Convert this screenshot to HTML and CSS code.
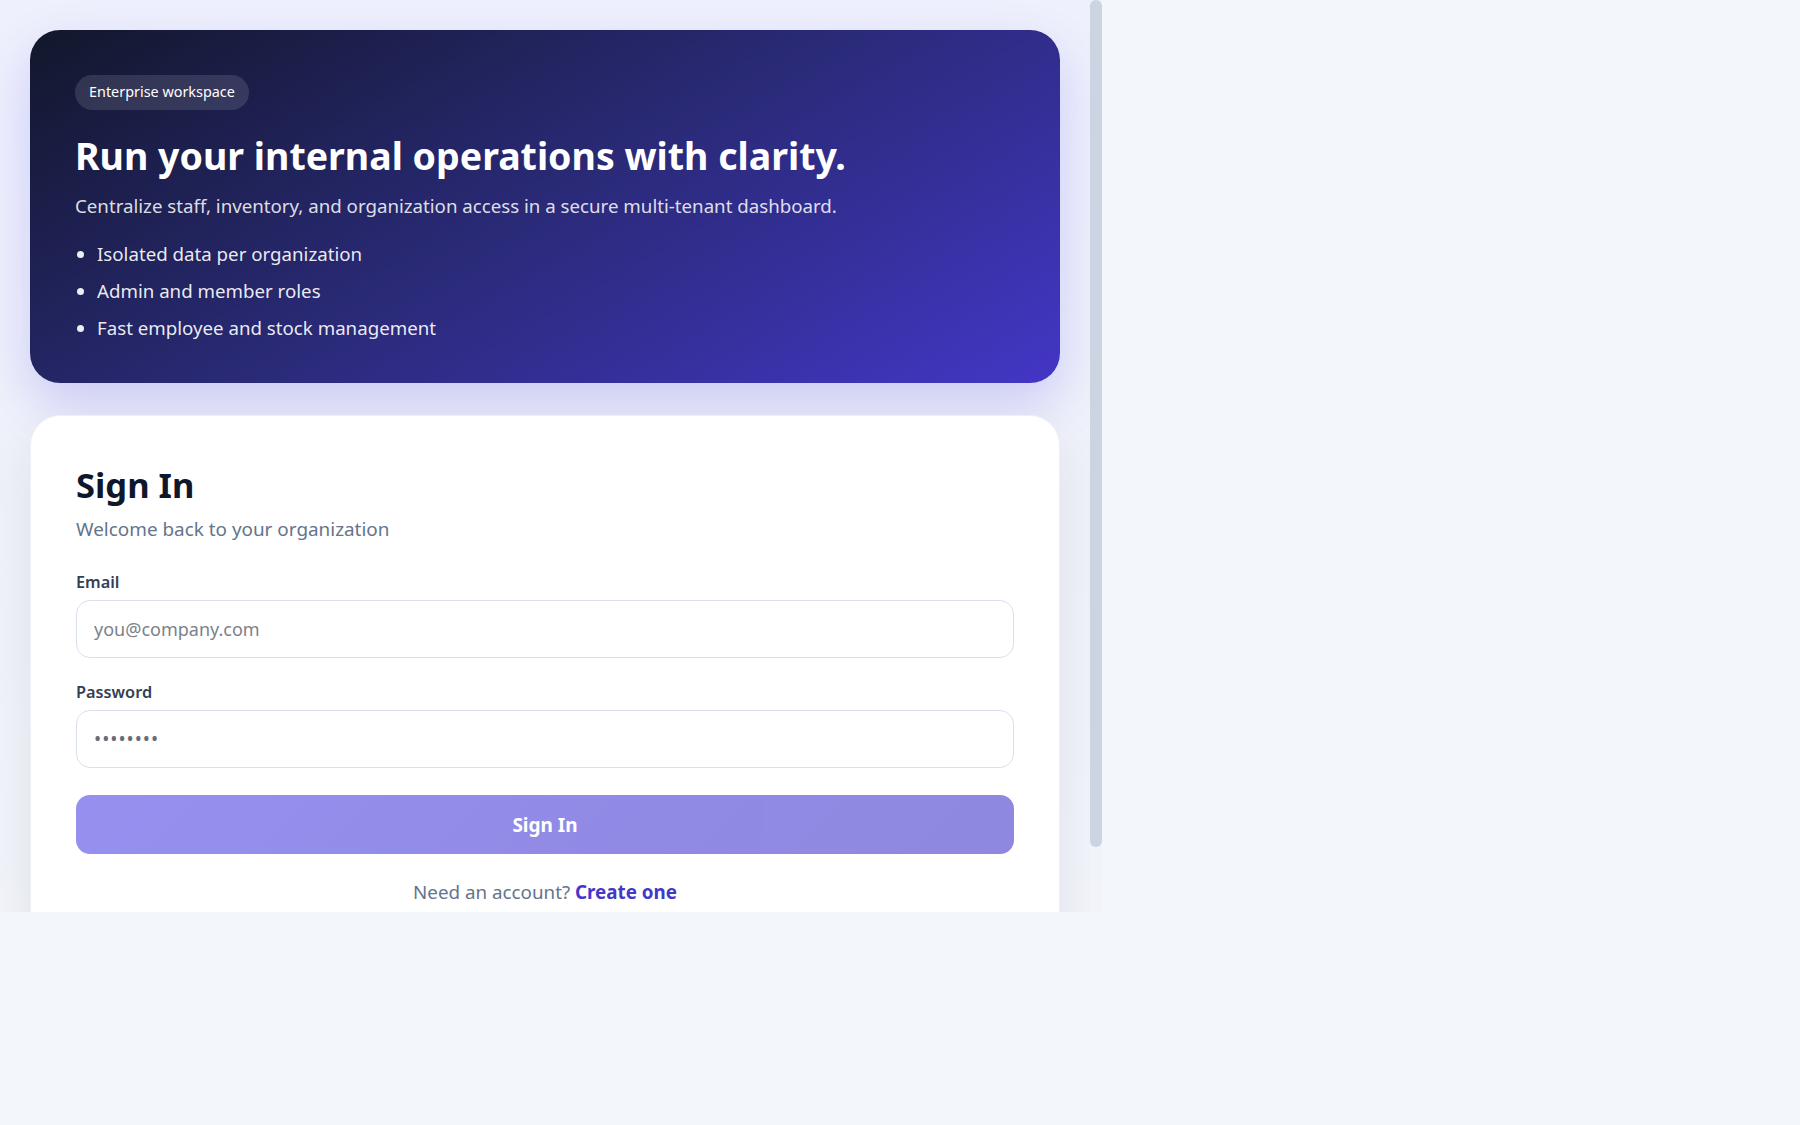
FILE: index.html
```html
<!DOCTYPE html>
<html lang="en">
<head>
<meta charset="utf-8">
<title>Sign In</title>
<link rel="stylesheet" href="styles.css">
</head>
<body>
<div class="frame">
  <div class="scroll-area">
    <main class="page">
      <section class="hero">
        <span class="badge">Enterprise workspace</span>
        <h1 class="hero-title">Run your internal operations with clarity.</h1>
        <p class="hero-text">Centralize staff, inventory, and organization access in a secure multi-tenant dashboard.</p>
        <ul class="hero-list">
          <li>Isolated data per organization</li>
          <li>Admin and member roles</li>
          <li>Fast employee and stock management</li>
        </ul>
      </section>
      <section class="card">
        <h2 class="card-title">Sign In</h2>
        <p class="card-sub">Welcome back to your organization</p>
        <form class="form">
          <label class="field">
            <span class="label">Email</span>
            <input class="input" type="email" placeholder="you@company.com">
          </label>
          <label class="field">
            <span class="label">Password</span>
            <input class="input" type="password" value="password">
          </label>
          <button class="btn" type="button" disabled>Sign In</button>
        </form>
        <p class="alt">Need an account? <a href="#" class="alt-link">Create one</a></p>
      </section>
    </main>
  </div>
  <div class="scrollbar"><div class="thumb"></div></div>
</div>
</body>
</html>
```

FILE: styles.css
```css
* { box-sizing: border-box; }

html, body {
  margin: 0;
  padding: 0;
  background: #f3f6fb;
  font-family: "Segoe UI", "Noto Sans", sans-serif;
}

.frame {
  display: flex;
  width: 1102px;
  height: 912px;
  overflow: hidden;
  background: linear-gradient(180deg, #eef0fd 0%, #f0f2fa 60%, #f2f4fa 100%);
}

.scroll-area {
  flex: 1;
  min-width: 0;
  overflow: hidden;
}

.scrollbar {
  flex: none;
  width: 12px;
}

.thumb {
  height: 847px;
  background: #cbd5e1;
  border-radius: 6px;
}

.page {
  padding: 30px 30px 30px;
  display: flex;
  flex-direction: column;
  gap: 32px;
}

.hero {
  border-radius: 30px;
  padding: 45px 45px 37px;
  color: #fff;
  background: linear-gradient(150deg, #12172b 0%, #2a2a78 50%, #4336c6 100%);
  box-shadow: 0 22px 50px rgba(79, 70, 229, 0.22);
}

.badge {
  display: inline-block;
  padding: 7px 14px 8px;
  border-radius: 999px;
  background: rgba(255, 255, 255, 0.12);
  font-size: 14.4px;
  line-height: 20px;
}

.hero-title {
  margin: 24px 0 0;
  font-size: 37.5px;
  line-height: 44px;
  font-weight: 700;
}

.hero-text {
  margin: 15px 0 0;
  font-size: 18.7px;
  line-height: 26px;
  color: rgba(255, 255, 255, 0.86);
}

.hero-list {
  margin: 16px 0 0;
  padding-left: 22px;
  font-size: 18.7px;
  line-height: 37px;
  color: rgba(255, 255, 255, 0.92);
}

.card {
  background: #fff;
  border-radius: 30px;
  border: 1px solid #eef0f6;
  padding: 48px 45px 45px;
  box-shadow: 0 20px 50px rgba(15, 23, 42, 0.08);
}

.card-title {
  margin: 0;
  font-size: 34.5px;
  line-height: 42px;
  font-weight: 700;
  color: #0f172a;
}

.card-sub {
  margin: 10px 0 0;
  font-size: 18.9px;
  line-height: 26px;
  color: #64748b;
}

.form {
  margin-top: 30px;
  display: flex;
  flex-direction: column;
  gap: 24px;
}

.field {
  display: flex;
  flex-direction: column;
  gap: 8px;
}

.label {
  font-size: 16.3px;
  line-height: 20px;
  font-weight: 600;
  color: #334155;
}

.input {
  height: 58px;
  padding: 0 17px;
  border: 1px solid #d9e0ec;
  border-radius: 14px;
  font-family: inherit;
  font-size: 18px;
  color: #6b7280;
  background: #fff;
  outline: none;
}

.input[type="password"] { font-size: 19px; letter-spacing: 1px; color: #676c76; }

.input::placeholder { color: #7c818b; }

.btn {
  margin-top: 3px;
  height: 59px;
  border: 0;
  border-radius: 14px;
  background: linear-gradient(135deg, #4f46e5, #4338ca);
  opacity: 0.6;
  color: #fff;
  font-family: inherit;
  font-size: 19px;
  font-weight: 700;
}

.alt {
  margin: 25px 0 0;
  text-align: center;
  font-size: 18.8px;
  line-height: 26px;
  color: #64748b;
}

.alt-link {
  color: #4338ca;
  font-weight: 700;
  text-decoration: none;
}
```
